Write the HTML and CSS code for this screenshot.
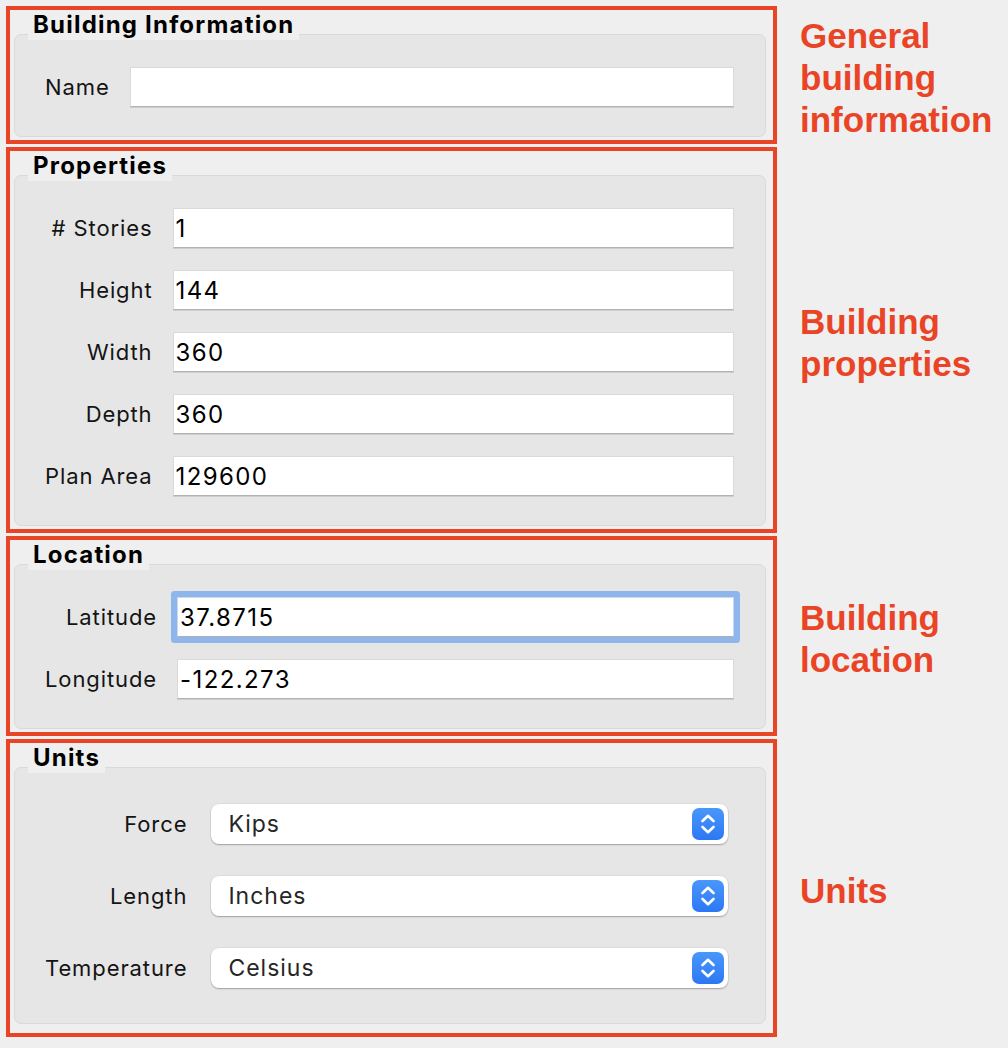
FILE: index.html
```html
<!DOCTYPE html>
<html>
<head>
<meta charset="utf-8">
<title>Building</title>
<link rel="stylesheet" href="styles.css">
</head>
<body>
<main class="page">
  <section class="row">
    <div class="frame">
      <div class="group">
        <div class="group-title">Building Information</div>
        <div class="panel form">
          <label class="lbl">Name</label><input class="field" type="text" value="">
        </div>
      </div>
    </div>
    <p class="note">General<br>building<br>information</p>
  </section>

  <section class="row">
    <div class="frame">
      <div class="group">
        <div class="group-title">Properties</div>
        <div class="panel form">
          <label class="lbl"># Stories</label><input class="field" type="text" value="1">
          <label class="lbl">Height</label><input class="field" type="text" value="144">
          <label class="lbl">Width</label><input class="field" type="text" value="360">
          <label class="lbl">Depth</label><input class="field" type="text" value="360">
          <label class="lbl">Plan Area</label><input class="field" type="text" value="129600">
        </div>
      </div>
    </div>
    <p class="note">Building<br>properties</p>
  </section>

  <section class="row">
    <div class="frame">
      <div class="group">
        <div class="group-title">Location</div>
        <div class="panel form">
          <label class="lbl">Latitude</label><input class="field field--focus" type="text" value="37.8715">
          <label class="lbl">Longitude</label><input class="field" type="text" value="-122.273">
        </div>
      </div>
    </div>
    <p class="note">Building<br>location</p>
  </section>

  <section class="row">
    <div class="frame frame--tall">
      <div class="group">
        <div class="group-title">Units</div>
        <div class="panel form form--popups">
          <label class="lbl">Force</label>
          <div class="popup"><span>Kips</span><span class="stepper"><svg viewBox="0 0 32 32" width="32" height="32"><path d="M10.5 13 L16 7.8 L21.5 13 M10.5 19 L16 24.2 L21.5 19" fill="none" stroke="#fff" stroke-width="2.6" stroke-linecap="round" stroke-linejoin="round"/></svg></span></div>
          <label class="lbl">Length</label>
          <div class="popup"><span>Inches</span><span class="stepper"><svg viewBox="0 0 32 32" width="32" height="32"><path d="M10.5 13 L16 7.8 L21.5 13 M10.5 19 L16 24.2 L21.5 19" fill="none" stroke="#fff" stroke-width="2.6" stroke-linecap="round" stroke-linejoin="round"/></svg></span></div>
          <label class="lbl">Temperature</label>
          <div class="popup"><span>Celsius</span><span class="stepper"><svg viewBox="0 0 32 32" width="32" height="32"><path d="M10.5 13 L16 7.8 L21.5 13 M10.5 19 L16 24.2 L21.5 19" fill="none" stroke="#fff" stroke-width="2.6" stroke-linecap="round" stroke-linejoin="round"/></svg></span></div>
        </div>
      </div>
    </div>
    <p class="note">Units</p>
  </section>
</main>
</body>
</html>
```

FILE: styles.css
```css
html, body {
  margin: 0;
  background: #efefef;
}

body {
  font-family: Inter, "Liberation Sans", sans-serif;
  color: #111;
}

.page {
  display: flex;
  flex-direction: column;
  gap: 3px;
  padding: 6px 0 0 6px;
}

.row {
  display: flex;
  align-items: center;
}

.frame {
  box-sizing: border-box;
  width: 771px;
  border: 4px solid #ea4427;
  padding: 0 7px 3px 4px;
}

.frame--tall {
  padding-bottom: 9px;
}

.group-title {
  position: relative;
  z-index: 1;
  display: inline-block;
  margin-left: 14px;
  margin-bottom: -6px;
  padding: 0 5px;
  height: 30px;
  line-height: 30px;
  font-size: 24px;
  font-weight: 700;
  letter-spacing: 1.2px;
  color: #000;
  background: #efefef;
  vertical-align: top;
}

.panel {
  box-sizing: border-box;
  background: #e6e6e6;
  border: 1px solid #dadada;
  border-radius: 7px;
}

.form {
  display: grid;
  grid-template-columns: auto 1fr;
  column-gap: 20px;
  row-gap: 22px;
  align-items: center;
  padding: 32px 31px 29px 30px;
}

.form--popups {
  row-gap: 32px;
  padding-top: 36px;
  padding-bottom: 35px;
}

.lbl {
  justify-self: end;
  font-size: 22px;
  letter-spacing: 0.9px;
  color: #141414;
  white-space: nowrap;
}

.field {
  box-sizing: border-box;
  width: 100%;
  min-width: 0;
  height: 40px;
  margin: 0;
  padding: 0 2px;
  font-family: Inter, "Liberation Sans", sans-serif;
  font-size: 24px;
  letter-spacing: 1.4px;
  color: #000;
  background: #fff;
  border: 1px solid #dadada;
  border-bottom-color: #b3b3b3;
  border-radius: 0;
  box-shadow: 0 1px 0 rgba(0, 0, 0, 0.1);
  outline: none;
}

.field--focus {
  border-radius: 1px;
  border-color: #c9d9ef;
  border-bottom-color: #b0b0b0;
  box-shadow: 0 0 0 6px #8fb6ec;
}

.popup {
  box-sizing: border-box;
  display: flex;
  align-items: center;
  justify-content: space-between;
  height: 40px;
  margin: 0 6px 0 4px;
  padding: 0 4px 0 17px;
  background: #fff;
  border-radius: 8px;
  box-shadow: 0 1px 1.5px rgba(0, 0, 0, 0.28), 0 0 0 0.5px rgba(0, 0, 0, 0.08);
  font-size: 23px;
  letter-spacing: 1px;
  color: #262626;
}

.stepper {
  display: block;
  width: 32px;
  height: 32px;
  border-radius: 7px;
  background: linear-gradient(#4a97fb, #2c78f5);
}

.stepper svg {
  display: block;
}

.note {
  margin: 0 0 0 23px;
  padding-top: 5px;
  font-family: "Liberation Sans", Arial, sans-serif;
  font-weight: 700;
  font-size: 35px;
  line-height: 42px;
  color: #ea4427;
}
```
